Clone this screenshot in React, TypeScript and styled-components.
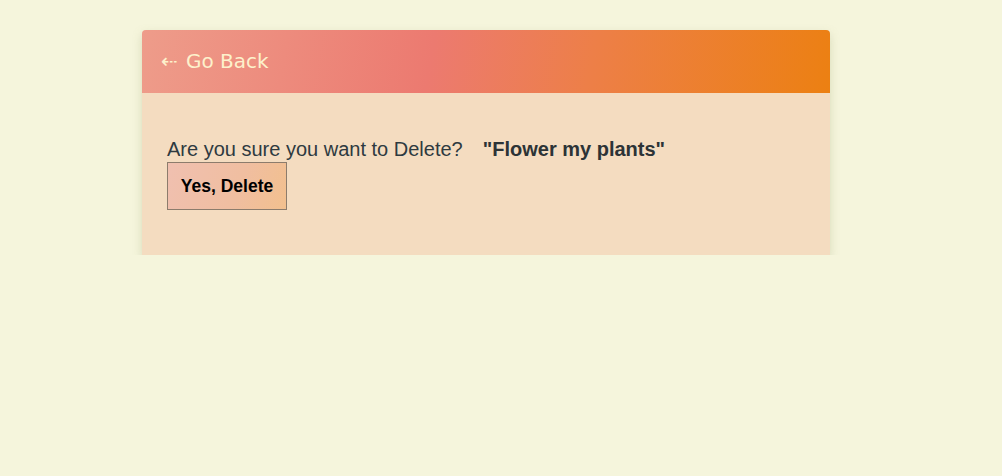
import React from "react";
import styled, { createGlobalStyle } from "styled-components";

const Global = createGlobalStyle`
  html, body { margin: 0; padding: 0; background: #f5f5dc; }
  body { font-family: "Liberation Sans", Arial, sans-serif; }
`;

const Page = styled.div`
  padding: 30px 0 0 142px;
`;

const Card = styled.div`
  width: 688px;
  background: #f4dcc0;
  border-radius: 4px 4px 0 0;
  box-shadow: 0 4px 10px rgba(160, 170, 120, 0.35);
  overflow: hidden;
`;

const Header = styled.div`
  height: 63px;
  display: flex;
  align-items: center;
  padding-left: 19px;
  background: linear-gradient(100deg, #ee9c8a 0%, #ec7a70 42%, #ed7f48 65%, #ec8012 100%);
`;

const BackLink = styled.a`
  font-family: "DejaVu Sans", Verdana, sans-serif;
  font-size: 20px;
  color: #fdf1cc;
  text-decoration: none;
  display: flex;
  align-items: center;
  gap: 8px;
  margin-top: -2px;
`;

const Arrow = styled.span`
  font-size: 20px;
  display: inline-block;
  width: 17px;
  overflow: hidden;
`;

const Body = styled.div`
  padding: 44px 25px 45px;
`;

const Question = styled.p`
  margin: 0;
  font-size: 20px;
  line-height: 24px;
  color: #2e3a40;
`;

const Name = styled.strong`
  margin-left: 20px;
  color: #2c3336;
`;

const DeleteButton = styled.button`
  width: 120px;
  height: 48px;
  font-family: "Liberation Sans", Arial, sans-serif;
  font-size: 17.5px;
  font-weight: bold;
  color: #000;
  border: 1px solid #8c7c6c;
  background: linear-gradient(110deg, #f0c0b0 0%, #f0bea0 60%, #f2c08e 100%);
  cursor: pointer;
  display: block;
  margin-top: 1px;
  padding: 0;
`;

export default function App() {
  return (
    <>
      <Global />
      <Page>
        <Card>
          <Header>
            <BackLink href="#">
              <Arrow>⇠</Arrow>Go Back
            </BackLink>
          </Header>
          <Body>
            <Question>
              Are you sure you want to Delete?<Name>"Flower my plants"</Name>
            </Question>
            <DeleteButton>Yes, Delete</DeleteButton>
          </Body>
        </Card>
      </Page>
    </>
  );
}
